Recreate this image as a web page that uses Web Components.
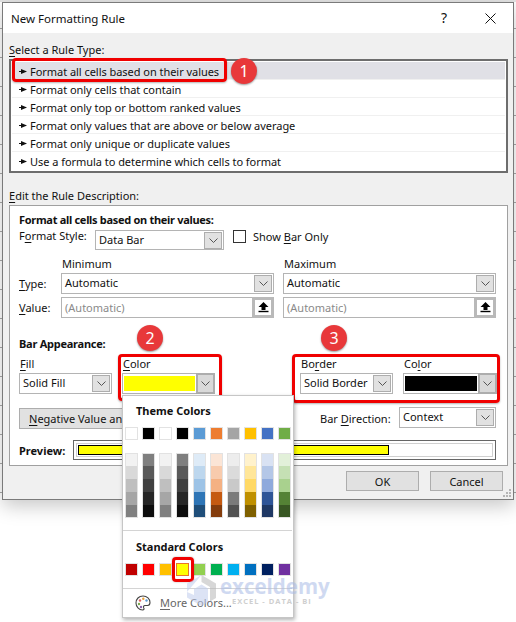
<!DOCTYPE html>
<html>
<head>
<meta charset="utf-8">
<style>
  html, body { margin: 0; padding: 0; background: #fff; }
  body { width: 516px; height: 622px; overflow: hidden; position: relative; font: 11px "Noto Sans", sans-serif; color: #111; }
</style>
</head>
<body>
<xl-backdrop></xl-backdrop>
<rule-dialog></rule-dialog>
<color-popup></color-popup>
<water-mark></water-mark>

<script>
const ARROW = `<svg width="8" height="5" viewBox="0 0 8 5"><path d="M0 2.500h3" stroke="#111" stroke-width="1"/><path d="M2 0L8 2.500 2 5z" fill="#111"/></svg>`;
const CHEVRON = `<svg width="9" height="5" viewBox="0 0 9 5"><path d="M0.5 0.5L4.5 4.5 8.5 0.5" fill="none" stroke="#555" stroke-width="1"/></svg>`;

class XlCombo extends HTMLElement {
  constructor() {
    super();
    this.attachShadow({ mode: "open" });
    this.shadowRoot.innerHTML = `
      <style>
        :host { display: flex; align-items: center; box-sizing: border-box; height: 21px; border: 1px solid #b4b4b4; background: #fff; padding: 2px 1px 2px 3px; font: inherit; white-space: nowrap; }
        .txt { flex: 1; position: relative; top: -1px; }
        .btn { width: 16px; height: 15px; background: #e1e1e1; border: 1px solid #adadad; display: flex; align-items: center; justify-content: center; flex: none; }
      </style>
      <span class="txt"><slot></slot></span>
      <span class="btn">${CHEVRON}</span>`;
  }
}
customElements.define("xl-combo", XlCombo);

class XlSwatchCombo extends HTMLElement {
  constructor() {
    super();
    this.attachShadow({ mode: "open" });
    const c = this.getAttribute("color");
    this.shadowRoot.innerHTML = `
      <style>
        :host { display: flex; box-sizing: border-box; height: 21px; border: 1px solid #b4b4b4; background: #fff; padding: 2px 0 2px 1px; }
        .sw { flex: 1; background: ${c}; }
        .btn { width: 19px; margin: -3px -1px -3px 1px; background: #d9d9d9; border: 2px solid #adadad; box-sizing: border-box; display: flex; align-items: center; justify-content: center; }
      </style>
      <span class="sw"></span>
      <span class="btn">${CHEVRON}</span>`;
  }
}
customElements.define("xl-swatch-combo", XlSwatchCombo);

class XlValue extends HTMLElement {
  constructor() {
    super();
    this.attachShadow({ mode: "open" });
    this.shadowRoot.innerHTML = `
      <style>
        :host { display: flex; align-items: center; box-sizing: border-box; height: 21px; border: 1px solid #b4b4b4; background: #fff; padding-left: 3px; color: #8a8a8a; white-space: nowrap; }
        .txt { flex: 1; }
        .ref { box-sizing: border-box; width: 22px; height: 21px; margin: -1px; border: 3px solid #b9b9b9; background: #fff; display: flex; align-items: center; justify-content: center; }
      </style>
      <span class="txt"><slot></slot></span>
      <span class="ref"><svg width="11" height="11" viewBox="0 0 11 11"><path d="M5.500 0L10.500 5H7.500V8H3.500V5H0.500z" fill="#000"/><path d="M0.500 9.500H10.500" stroke="#000" stroke-width="1.400"/></svg></span>`;
  }
}
customElements.define("xl-value", XlValue);

class XlButton extends HTMLElement {
  constructor() {
    super();
    this.attachShadow({ mode: "open" });
    this.shadowRoot.innerHTML = `
      <style>
        :host { display: flex; align-items: center; justify-content: center; box-sizing: border-box; height: 21px; border: 1px solid #adadad; background: #e1e1e1; white-space: nowrap; }
      </style>
      <slot></slot>`;
  }
}
customElements.define("xl-button", XlButton);

class XlBadge extends HTMLElement {
  constructor() {
    super();
    this.attachShadow({ mode: "open" });
    this.shadowRoot.innerHTML = `
      <style>
        :host { position: absolute; box-sizing: border-box; width: 26px; height: 26px; border-radius: 50%; background: #e8383a; box-shadow: 0 1px 2px rgba(0,0,0,.4); color: #fff; font: 16px "Noto Sans", sans-serif; display: flex; align-items: center; justify-content: center; }
      </style>
      <slot></slot>`;
  }
}
customElements.define("xl-badge", XlBadge);

class XlBackdrop extends HTMLElement {
  constructor() {
    super();
    this.attachShadow({ mode: "open" });
    this.shadowRoot.innerHTML = `
      <style>
        :host { position: absolute; left: 0; top: 0; width: 516px; height: 500px; display: block;
          background:
            linear-gradient(to bottom, #e4e4e4 0 2px, transparent 2px),
            repeating-linear-gradient(to bottom, transparent 0 28px, #a8a8a8 28px 29px),
            #fff; }
      </style>`;
  }
}
customElements.define("xl-backdrop", XlBackdrop);

class RuleDialog extends HTMLElement {
  constructor() {
    super();
    this.attachShadow({ mode: "open" });
    const rules = [
      "Format all cells based on their values",
      "Format only cells that contain",
      "Format only top or bottom ranked values",
      "Format only values that are above or below average",
      "Format only unique or duplicate values",
      "Use a formula to determine which cells to format"
    ];
    this.shadowRoot.innerHTML = `
      <style>
        :host { display: flex; flex-direction: column; position: relative; box-sizing: border-box; margin: 2px 0 0 2px; width: 512px; height: 498px; border: 1px solid #7a7a7a; background: #f0f0f0; box-shadow: 0 6px 18px rgba(0,0,0,.22); white-space: nowrap; }
        u { text-decoration-thickness: 1px; text-underline-offset: 2px; }
        .title { height: 30px; background: #fff; display: flex; align-items: center; padding-left: 8px; flex: none; color: #111; font-size: 11.500px; }
        .title span { flex: 1; }
        .title .help { flex: none; width: 14px; font-size: 14px; margin-right: 30px; position: relative; top: -1px; }
        .title svg { margin-right: 17px; }
        .body { flex: 1; padding: 8px 5px 0 6px; display: flex; flex-direction: column; }
        .lbl { height: 17px; line-height: 17px; }
        .list { margin-top: 1px; box-sizing: border-box; height: 114px; border: 2px solid #6d6d6d; background: #fff; padding: 1px 1px 0; }
        .row { display: flex; align-items: center; gap: 3px; height: 18px; padding: 1px 0 0 7px; box-sizing: border-box; border-bottom: 1px solid #f0f0f0; letter-spacing: -.04px; }
        .row:last-child { border-bottom: 0; }
        .row.sel { background: #e0e0e6; }
        .edit { margin-top: 14px; }
        .box { margin-top: 1px; box-sizing: border-box; height: 261px; border: 1px solid #a0a0a0; background: #fff; padding: 6px 10px 0 9px; display: flex; flex-direction: column; position: relative; }
        b { font-weight: 700; }
        .head { height: 16px; line-height: 16px; letter-spacing: -.3px; }
        .fmt { display: flex; align-items: flex-start; margin-top: 2px; }
        .fmt > .l { width: 76px; line-height: 16px; margin-top: -2px; }
        .fmt xl-combo { width: 129px; height: 20px; }
        .chk { width: 13px; height: 13px; box-sizing: border-box; border: 1px solid #333; background: #fff; margin: 0 7px 0 9px; flex: none; }
        .show { line-height: 16px; margin-top: -1px; }
        .limits { display: grid; grid-template-columns: 33px 213px 213px; column-gap: 9px; grid-template-rows: 18px 21px 21px; row-gap: 3px; margin-top: 2px; align-items: center; }
        .limits .cap { align-self: end; margin-bottom: -1px; padding-left: 1px; }
        .bar-h { margin-top: 18px; height: 16px; line-height: 16px; letter-spacing: -.25px; }
        .app { display: flex; margin-top: 4px; }
        .col { display: flex; flex-direction: column; }
        .col .l { height: 17px; line-height: 15px; padding-left: 1px; }
        .neg { display: flex; margin-top: 14px; align-items: flex-start; }
        .neg xl-button { width: 200px; justify-content: flex-start; padding-left: 9px; }
        .neg .dir { margin-left: 101px; width: 79px; margin-top: 3px; line-height: 16px; }
        .neg xl-combo { width: 97px; margin-top: -1px; }
        .prev { display: flex; align-items: center; margin-top: 11px; }
        .prev b { width: 54px; }
        .pbox { box-sizing: border-box; width: 423px; height: 20px; border: 1px solid #666; padding: 2px; }
        .pin { box-sizing: border-box; height: 100%; border: 1px solid #d0d0d0; padding: 1px; }
        .pbar { box-sizing: border-box; height: 100%; width: 311px; background: #ff0; border: 1px solid #000; }
        .foot { display: flex; justify-content: flex-end; gap: 11px; margin-top: 5px; padding-right: 5px; }
        .foot xl-button { width: 73px; height: 20px; }
        .frame { position: absolute; box-sizing: border-box; border: 3px solid #f00000; border-radius: 4px; box-shadow: 0 1px 2px rgba(0,0,0,.3); pointer-events: none; }
        .grip { position: absolute; right: 2px; bottom: 2px; }
      </style>
      <div class="title">
        <span>New Formatting Rule</span>
        <span class="help">?</span>
        <svg width="11" height="11" viewBox="0 0 11 11"><path d="M0.500 0.500L10.500 10.500M10.500 0.500L0.500 10.500" stroke="#111" stroke-width="1"/></svg>
      </div>
      <div class="body">
        <div class="lbl"><u>S</u>elect a Rule Type:</div>
        <div class="list">
          ${rules.map((r, i) => `<div class="row${i === 0 ? " sel" : ""}">${ARROW}<span>${r}</span></div>`).join("")}
        </div>
        <div class="lbl edit"><u>E</u>dit the Rule Description:</div>
        <div class="box">
          <b class="head">Format all cells based on their values:</b>
          <div class="fmt">
            <span class="l">F<u>o</u>rmat Style:</span>
            <xl-combo>Data Bar</xl-combo>
            <span class="chk"></span>
            <span class="show">Show <u>B</u>ar Only</span>
          </div>
          <div class="limits">
            <span></span><span class="cap">Minimum</span><span class="cap">Maximum</span>
            <span><u>T</u>ype:</span><xl-combo>Automatic</xl-combo><xl-combo>Automatic</xl-combo>
            <span><u>V</u>alue:</span><xl-value>(Automatic)</xl-value><xl-value>(Automatic)</xl-value>
          </div>
          <b class="bar-h">Bar Appearance:</b>
          <div class="app">
            <div class="col" style="width:93px"><span class="l"><u>F</u>ill</span><xl-combo>Solid Fill</xl-combo></div>
            <div class="col" style="width:93px;margin-left:10px"><span class="l"><u>C</u>olor</span><xl-swatch-combo color="#ffff00"></xl-swatch-combo></div>
            <div class="col" style="width:93px;margin-left:85px"><span class="l">Bo<u>r</u>der</span><xl-combo>Solid Border</xl-combo></div>
            <div class="col" style="width:94px;margin-left:10px"><span class="l">Co<u>l</u>or</span><xl-swatch-combo color="#000000"></xl-swatch-combo></div>
          </div>
          <div class="neg">
            <xl-button><span><u>N</u>egative Value an</span></xl-button>
            <span class="dir">Bar <u>D</u>irection:</span>
            <xl-combo>Context</xl-combo>
          </div>
          <div class="prev">
            <b>Preview:</b>
            <div class="pbox"><div class="pin"><div class="pbar"></div></div></div>
          </div>
        </div>
        <div class="foot">
          <xl-button>OK</xl-button>
          <xl-button>Cancel</xl-button>
        </div>
      </div>
      <svg class="grip" width="8" height="8" viewBox="0 0 8 8" fill="#b5b5b5"><rect x="6" y="0" width="2" height="2"/><rect x="3" y="3" width="2" height="2"/><rect x="6" y="3" width="2" height="2"/><rect x="0" y="6" width="2" height="2"/><rect x="3" y="6" width="2" height="2"/><rect x="6" y="6" width="2" height="2"/></svg>
      <div class="frame" style="left:9px;top:55px;width:215px;height:24px"></div>
      <div class="frame" style="left:115px;top:351px;width:104px;height:47px"></div>
      <div class="frame" style="left:289px;top:351px;width:208px;height:49px"></div>
      <xl-badge style="left:228px;top:55px">1</xl-badge>
      <xl-badge style="left:134px;top:322px">2</xl-badge>
      <xl-badge style="left:318px;top:322px">3</xl-badge>`;
  }
}
customElements.define("rule-dialog", RuleDialog);

class ColorPopup extends HTMLElement {
  constructor() {
    super();
    this.attachShadow({ mode: "open" });
    const top = ["#ffffff","#000000","#ffffff","#000000","#5b9bd5","#ed7d31","#a5a5a5","#ffc000","#4472c4","#70ad47"];
    const shades = [
      ["#f2f2f2","#d9d9d9","#bfbfbf","#a6a6a6","#808080"],
      ["#7f7f7f","#595959","#404040","#262626","#0d0d0d"],
      ["#f2f2f2","#d9d9d9","#bfbfbf","#a6a6a6","#808080"],
      ["#7f7f7f","#595959","#404040","#262626","#0d0d0d"],
      ["#deebf7","#bdd7ee","#9dc3e6","#2e75b6","#1f4e79"],
      ["#fbe5d6","#f8cbad","#f4b183","#c55a11","#843c0c"],
      ["#ededed","#dbdbdb","#c9c9c9","#7b7b7b","#525252"],
      ["#fff2cc","#ffe699","#ffd966","#bf9000","#7f6000"],
      ["#d9e2f3","#b4c7e7","#8faadc","#2f5597","#1f3864"],
      ["#e2f0d9","#c5e0b4","#a9d18e","#548235","#385723"]
    ];
    const std = ["#c00000","#ff0000","#ffc000","#ffff00","#92d050","#00b050","#00b0f0","#0070c0","#002060","#7030a0"];
    this.shadowRoot.innerHTML = `
      <style>
        :host { position: absolute; left: 122px; top: 395px; box-sizing: border-box; width: 172px; height: 223px; background: #fff; border: 1px solid #c6c6c6; box-shadow: 1px 2px 4px rgba(0,0,0,.3); display: flex; flex-direction: column; }
        .hd { font-weight: 700; height: 16px; line-height: 16px; padding-left: 13px; }
        .grid { display: grid; grid-template-columns: repeat(10, 13px); column-gap: 4px; padding-left: 2px; }
        .sw { box-sizing: border-box; width: 13px; height: 13px; border: 1px solid #e2e2e2; }
        .col { display: flex; flex-direction: column; box-sizing: border-box; width: 13px; border: 1px solid #e2e2e2; }
        .col i { display: block; height: 13px; }
        .col i:first-child { height: 12px; }
        .col i:last-child { height: 12px; }
        .sep { height: 1px; background: #d4d4d4; margin-right: 1px; }
        .more { display: flex; align-items: center; padding-left: 12px; height: 29px; color: #666; }
        .more svg { margin-right: 9px; }
        .sel { position: relative; }
        .sel::after { content: ""; position: absolute; left: -5px; top: -7px; width: 22px; height: 25px; box-sizing: border-box; border: 3px solid #f00000; border-radius: 4px; box-shadow: 0 0 2px rgba(0,0,0,.3); }
        .sel.sw { border-color: #e8742a; }
        u { text-decoration-thickness: 1px; text-underline-offset: 2px; }
      </style>
      <div class="hd" style="margin-top:7px">Theme Colors</div>
      <div class="grid" style="margin-top:8px">
        ${top.map(c => `<span class="sw" style="background:${c}"></span>`).join("")}
      </div>
      <div class="grid" style="margin-top:13px">
        ${shades.map(col => `<span class="col">${col.map(c => `<i style="background:${c}"></i>`).join("")}</span>`).join("")}
      </div>
      <div class="sep" style="margin-top:12px"></div>
      <div class="hd" style="margin-top:8px">Standard Colors</div>
      <div class="grid" style="margin-top:8px">
        ${std.map((c, i) => `<span class="sw${i === 3 ? " sel" : ""}" style="background:${c}"></span>`).join("")}
      </div>
      <div class="sep" style="margin-top:12px"></div>
      <div class="more">
        <svg width="16" height="16" viewBox="0 0 16 16"><path d="M8 1C3.800 1 1 4 1 8c0 3.800 3 7 6.500 7 1.700 0 1.800-1.300 1.200-2.200-.6-1-.1-2.300 1.300-2.300h2.500C14 10.500 15 9.500 15 7.500 15 3.800 12 1 8 1z" fill="#fff" stroke="#444" stroke-width="1.100"/><circle cx="5" cy="5.500" r="1.200" fill="#e0605a"/><circle cx="8.300" cy="3.800" r="1.200" fill="#e8a33d"/><circle cx="11.500" cy="5.500" r="1.200" fill="#5b9bd5"/><circle cx="4" cy="9" r="1.200" fill="#7aa84f"/><circle cx="6" cy="12" r="1.200" fill="#8a63b0"/></svg>
        <span><u>M</u>ore Colors...</span>
      </div>`;
  }
}
customElements.define("color-popup", ColorPopup);

class WaterMark extends HTMLElement {
  constructor() {
    super();
    this.attachShadow({ mode: "open" });
    this.shadowRoot.innerHTML = `
      <style>
        :host { position: absolute; left: 187px; top: 575px; display: flex; opacity: .55; pointer-events: none; }
        .t { display: flex; flex-direction: column; margin-left: 4px; }
        .n { font: 700 20.500px/22px "Open Sans", sans-serif; color: #a9bbe6; }
        .s { font: 700 7.500px/9px "Open Sans", sans-serif; color: #a8a8a8; letter-spacing: 1px; margin-left: 12px; white-space: pre; }
      </style>
      <svg width="29" height="31" viewBox="0 0 29 31"><path d="M14.500 0L29 8.500V23l-6 3.500V12L14.500 7z" fill="#b8b8b8"/><path d="M14.500 0L0 8.500v14L14.500 31 21 27V13.500L14.500 9.500 7 14v6l-7-3z" fill="#c0cdee"/></svg>
      <div class="t"><span class="n">exceldemy</span><span class="s">EXCEL - DATA - BI</span></div>`;
  }
}
customElements.define("water-mark", WaterMark);
</script>
</body>
</html>
